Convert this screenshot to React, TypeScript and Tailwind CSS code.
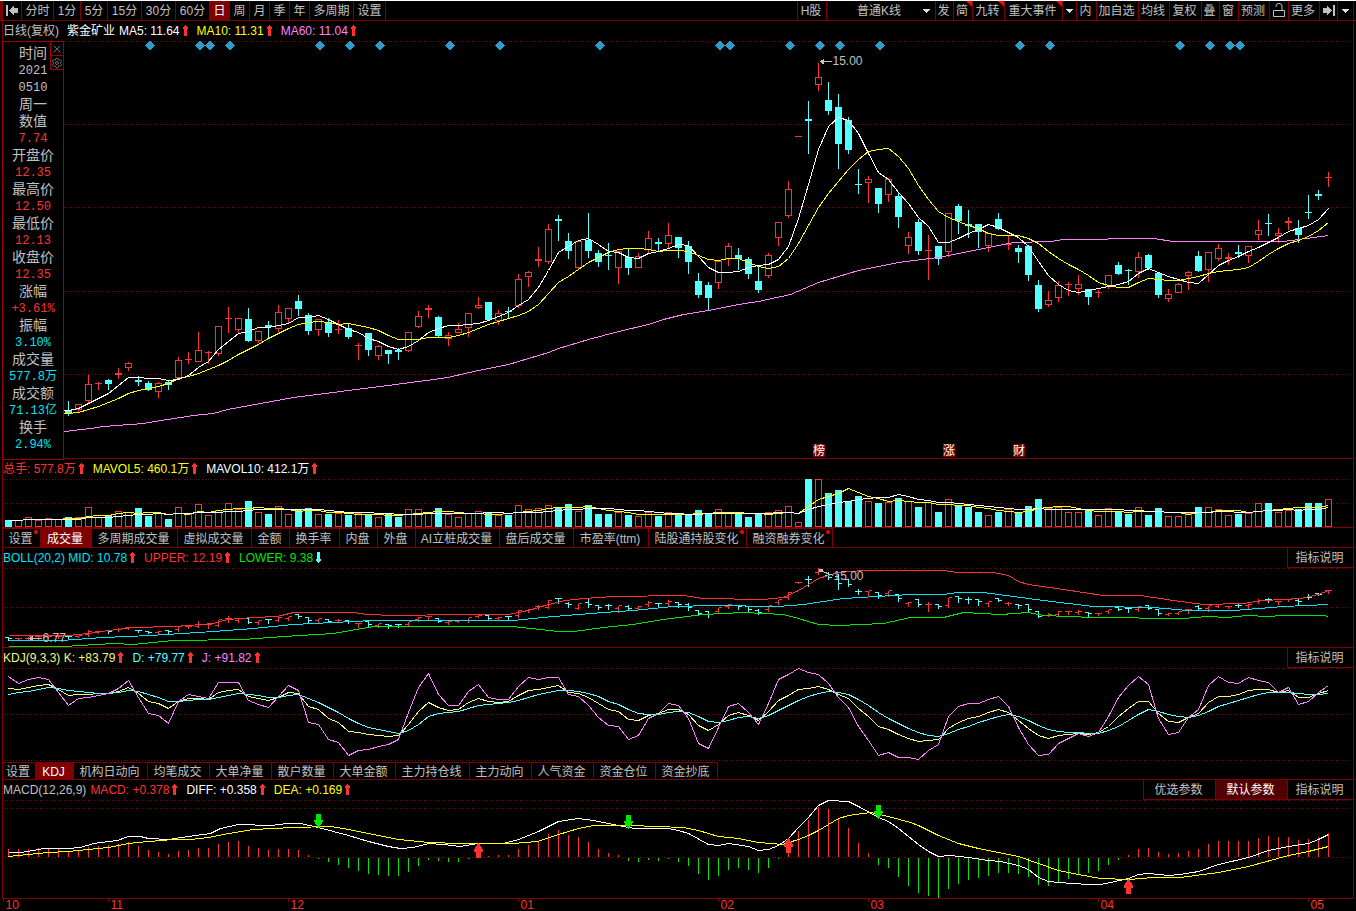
import type { ReactNode } from 'react';
import { Settings, X } from 'lucide-react';

// [direction, high, body top, body bottom, low], all as y positions
type Candle = ['u' | 'd', number, number, number, number];
type Point = [number, number];

const RED = '#ff3232';
const CYAN = '#54ffff';
const LINE = '#800000';

const candles: Candle[] = [
  ['d', 414, 418, 422, 424], ['u', 416, 420, 423, 425], ['u', 410, 412, 419, 420], ['u', 404, 408, 412, 424], ['u', 404, 408, 411, 414],
  ['u', 403, 408, 411, 415], ['d', 400, 410, 412, 415], ['u', 403, 404, 409, 412], ['u', 374, 384, 400, 403], ['u', 381, 383, 383, 389],
  ['d', 378, 380, 383, 389], ['u', 367, 373, 374, 378], ['u', 361, 363, 367, 370], ['d', 375, 380, 381, 385], ['d', 380, 383, 389, 390],
  ['u', 381, 383, 391, 397], ['d', 379, 382, 384, 389], ['u', 356, 360, 377, 378], ['u', 351, 359, 359, 363], ['u', 331, 350, 361, 361],
  ['u', 350, 352, 352, 363], ['u', 326, 326, 353, 355], ['u', 306, 318, 318, 332], ['u', 318, 318, 329, 333], ['d', 307, 319, 340, 341],
  ['u', 331, 331, 340, 342], ['d', 320, 325, 326, 338], ['u', 304, 312, 328, 331], ['u', 308, 308, 318, 322], ['d', 294, 301, 308, 315],
  ['d', 312, 315, 330, 334], ['u', 318, 319, 329, 335], ['d', 317, 322, 332, 336], ['u', 319, 329, 329, 333], ['d', 323, 328, 336, 338],
  ['u', 342, 345, 345, 359], ['d', 332, 333, 349, 355], ['u', 344, 346, 355, 359], ['d', 349, 350, 353, 363], ['d', 347, 350, 351, 359],
  ['u', 332, 332, 350, 351], ['u', 310, 316, 326, 327], ['u', 304, 308, 309, 317], ['d', 315, 317, 335, 336], ['u', 331, 335, 338, 345],
  ['u', 322, 329, 332, 332], ['u', 312, 313, 327, 336], ['u', 296, 305, 307, 308], ['d', 301, 302, 319, 320], ['u', 309, 313, 320, 324],
  ['d', 306, 311, 311, 317], ['u', 273, 279, 305, 307], ['u', 270, 272, 276, 286], ['u', 246, 259, 260, 266], ['u', 223, 229, 261, 263],
  ['d', 214, 219, 220, 240], ['d', 232, 241, 250, 258], ['u', 241, 241, 267, 269], ['d', 212, 240, 250, 257], ['d', 249, 253, 261, 266],
  ['d', 242, 255, 255, 269], ['u', 251, 251, 267, 283], ['d', 248, 257, 267, 274], ['u', 252, 256, 267, 267], ['u', 230, 238, 249, 252],
  ['d', 237, 242, 243, 251], ['u', 222, 235, 243, 248], ['d', 237, 237, 247, 257], ['d', 240, 246, 261, 273], ['d', 272, 281, 294, 297],
  ['d', 281, 285, 297, 309], ['u', 261, 261, 282, 288], ['u', 242, 246, 258, 265], ['d', 247, 255, 258, 269], ['d', 256, 259, 273, 278],
  ['d', 266, 281, 289, 292], ['u', 252, 255, 275, 277], ['u', 221, 222, 237, 245], ['u', 180, 189, 215, 217], ['u', 136, 136, 136, 136],
  ['d', 100, 119, 120, 153], ['u', 62, 77, 84, 90], ['d', 81, 100, 110, 114], ['d', 93, 107, 143, 168], ['d', 116, 120, 149, 153],
  ['d', 168, 184, 184, 193], ['u', 175, 179, 182, 202], ['d', 188, 188, 203, 212], ['u', 177, 179, 194, 201], ['d', 191, 196, 216, 227],
  ['u', 231, 237, 245, 253], ['d', 218, 222, 250, 254], ['u', 234, 250, 250, 279], ['d', 246, 246, 258, 264], ['u', 213, 213, 251, 256],
  ['d', 203, 206, 220, 233], ['d', 209, 224, 225, 237], ['d', 224, 224, 231, 247], ['u', 232, 233, 245, 251], ['d', 212, 219, 228, 229],
  ['u', 235, 244, 244, 249], ['d', 244, 248, 251, 262], ['d', 244, 246, 274, 280], ['d', 279, 285, 308, 311], ['u', 290, 300, 304, 306],
  ['u', 280, 285, 297, 301], ['u', 281, 284, 284, 295], ['u', 274, 284, 288, 294], ['d', 288, 289, 296, 304], ['u', 289, 292, 292, 297],
  ['u', 275, 275, 286, 288], ['d', 261, 265, 273, 274], ['d', 268, 270, 270, 284], ['u', 251, 257, 271, 277], ['d', 253, 255, 267, 269],
  ['d', 273, 273, 294, 297], ['u', 288, 294, 298, 301], ['u', 282, 284, 292, 292], ['u', 270, 272, 275, 289], ['d', 250, 256, 270, 271],
  ['u', 252, 252, 269, 281], ['u', 243, 248, 258, 260], ['u', 252, 257, 258, 264], ['d', 244, 252, 253, 257], ['u', 245, 246, 255, 262],
  ['u', 219, 230, 234, 239], ['d', 213, 223, 223, 235], ['u', 227, 233, 235, 242], ['u', 216, 221, 222, 229], ['d', 219, 228, 234, 242],
  ['d', 194, 212, 212, 218], ['d', 189, 194, 195, 199], ['u', 171, 177, 177, 186],
];

const volumes = [
  7, 7, 10, 7, 9, 8, 10, 10, 20, 10, 12, 16, 15, 19, 11, 14, 8, 20, 13, 23,
  12, 17, 24, 18, 26, 15, 13, 21, 13, 17, 19, 13, 13, 14, 12, 14, 13, 10, 13, 10,
  18, 18, 14, 19, 13, 10, 14, 16, 14, 12, 12, 22, 18, 19, 22, 20, 23, 16, 22, 13,
  13, 15, 12, 11, 15, 11, 15, 13, 13, 17, 14, 18, 14, 14, 10, 14, 15, 17, 21, 5,
  48, 48, 34, 37, 26, 31, 26, 24, 25, 29, 26, 20, 25, 15, 28, 22, 20, 15, 12, 15,
  18, 15, 21, 28, 19, 20, 15, 15, 18, 12, 19, 15, 13, 20, 12, 19, 11, 11, 14, 20,
  20, 18, 12, 13, 14, 24, 24, 15, 17, 18, 24, 24, 28,
];

const jLine = [
  8, 15, 11, 9, 11, 24, 37, 30, 29, 27, 25, 20, 12, 29, 45, 47, 55, 33, 26, 28,
  30, 14, 14, 14, 32, 36, 39, 28, 17, 22, 54, 56, 71, 74, 87, 82, 81, 78, 76, 71,
  44, 19, 5, 26, 37, 37, 23, 16, 29, 31, 31, 18, 9, 11, 9, 9, 26, 28, 37, 49,
  57, 58, 71, 67, 50, 45, 35, 37, 50, 75, 80, 59, 38, 35, 44, 56, 35, 11, 6, 0,
  4, 6, 15, 29, 39, 58, 72, 87, 84, 89, 89, 91, 82, 76, 48, 38, 35, 35, 31, 28,
  38, 59, 76, 87, 86, 75, 70, 65, 68, 64, 48, 29, 17, 8, 16, 50, 66, 64, 49, 41,
  17, 8, 14, 15, 9, 12, 14, 24, 19, 36, 33, 24, 17,
];

const macdBars = [
  8, 8, 8, 9, 8, 8, 6, 7, 10, 11, 12, 13, 15, 11, 7, 5, 3, 6, 7, 9,
  9, 13, 15, 16, 11, 9, 7, 8, 8, 7, 2, -1, -4, -7, -10, -13, -16, -17, -18, -18,
  -14, -8, -2, -3, -4, -4, -1, 1, 1, 2, 2, 8, 12, 16, 23, 27, 22, 20, 15, 8,
  4, 2, -3, -4, -2, -3, -1, -4, -8, -16, -22, -18, -12, -10, -12, -15, -10, -1, 6, 26,
  37, 50, 48, 38, 29, 14, 4, -7, -10, -19, -28, -35, -38, -40, -31, -26, -22, -20, -18, -15,
  -15, -16, -19, -27, -28, -24, -21, -16, -15, -13, -7, -2, 2, 8, 9, 5, 3, 4, 6, 8,
  13, 16, 16, 16, 16, 19, 21, 20, 20, 17, 18, 20, 24,
];

const ma60: Point[] = [
  [64, 431], [90, 428], [103, 426], [143, 423], [167, 419], [193, 415], [213, 413], [227, 409], [260, 403], [293, 397], [340, 391],
  [380, 386], [410, 382], [433, 379], [447, 377], [478, 370], [508, 364], [528, 358], [548, 352], [558, 348], [588, 339], [618, 331],
  [648, 324], [663, 319], [683, 314], [708, 310], [738, 304], [758, 301], [790, 294], [818, 282], [858, 270], [898, 262], [938, 257],
  [968, 251], [988, 247], [1013, 242], [1050, 241], [1063, 239], [1093, 239], [1123, 238], [1153, 238], [1173, 241], [1283, 241], [1328, 235],
];

const bollUpper: Point[] = [
  [8, 67], [68, 67], [88, 65], [108, 62], [133, 59], [173, 58], [188, 57], [213, 55], [227, 51], [253, 49], [277, 48], [293, 44], [353, 44],
  [367, 46], [393, 47], [460, 46], [508, 46], [528, 42], [548, 36], [565, 32], [583, 30], [613, 28], [683, 27], [703, 30], [763, 31],
  [783, 29], [798, 22], [818, 10], [838, 4], [863, 2], [903, 2], [943, 2], [957, 4], [993, 4], [1008, 7], [1018, 13], [1028, 16], [1063, 21],
  [1103, 27], [1140, 27], [1173, 32], [1203, 36], [1243, 35], [1263, 32], [1300, 30], [1318, 26], [1328, 22],
];
const bollMid: Point[] = [
  [8, 72], [60, 72], [103, 69], [150, 67], [213, 63], [253, 60], [293, 56], [333, 54], [373, 52], [460, 52], [512, 52], [553, 48], [603, 44],
  [633, 42], [673, 38], [713, 37], [777, 38], [803, 36], [843, 30], [910, 26], [943, 26], [957, 24], [983, 24], [1013, 28], [1043, 32],
  [1093, 38], [1153, 39], [1187, 42], [1233, 42], [1283, 38], [1328, 36],
];
const bollLower: Point[] = [
  [8, 78], [63, 78], [113, 75], [133, 76], [173, 72], [243, 71], [283, 68], [333, 65], [373, 58], [460, 58], [512, 58], [558, 63], [573, 63],
  [603, 59], [633, 56], [663, 51], [703, 46], [743, 44], [783, 46], [798, 50], [818, 56], [838, 57], [883, 55], [910, 49], [943, 49],
  [963, 44], [1000, 46], [1028, 44], [1043, 47], [1093, 49], [1183, 50], [1207, 48], [1227, 49], [1247, 47], [1267, 48], [1283, 47],
  [1323, 47], [1328, 48],
];

const diff: Point[] = [
  [8, 52], [20, 52], [33, 50], [43, 48], [68, 48], [80, 47], [93, 43], [117, 40], [128, 36], [140, 36], [148, 38], [168, 39], [188, 36],
  [210, 33], [220, 28], [238, 24], [270, 25], [287, 23], [300, 23], [318, 27], [348, 35], [368, 41], [388, 46], [400, 48], [413, 47],
  [428, 43], [443, 44], [460, 46], [478, 43], [503, 43], [518, 39], [538, 31], [558, 21], [578, 18], [593, 20], [608, 23], [628, 27],
  [635, 28], [668, 28], [678, 30], [688, 33], [708, 44], [718, 45], [728, 43], [748, 46], [758, 50], [768, 49], [778, 45], [788, 38],
  [798, 27], [808, 17], [818, 5], [828, 0], [848, 1], [858, 6], [878, 17], [888, 21], [898, 28], [918, 44], [928, 51], [938, 56], [950, 55],
  [968, 57], [988, 60], [1000, 61], [1018, 65], [1028, 69], [1038, 77], [1048, 81], [1058, 82], [1073, 83], [1088, 84], [1100, 84],
  [1110, 82], [1128, 78], [1138, 74], [1148, 73], [1168, 75], [1180, 74], [1198, 71], [1218, 64], [1248, 57], [1268, 50], [1288, 46],
  [1308, 43], [1318, 39], [1328, 34],
];
const dea: Point[] = [
  [8, 56], [48, 52], [68, 51], [88, 49], [108, 47], [128, 43], [148, 41], [173, 39], [190, 39], [208, 37], [228, 33], [253, 29], [293, 27],
  [330, 26], [348, 29], [368, 33], [398, 39], [428, 42], [460, 43], [513, 43], [537, 41], [558, 34], [578, 28], [593, 25], [630, 25],
  [683, 27], [698, 30], [718, 36], [738, 38], [758, 42], [782, 44], [788, 42], [798, 39], [808, 35], [818, 30], [838, 18], [848, 15],
  [870, 12], [888, 16], [910, 22], [918, 25], [938, 35], [958, 43], [978, 48], [1018, 56], [1038, 63], [1058, 70], [1078, 74], [1100, 78],
  [1128, 79], [1153, 77], [1180, 77], [1218, 72], [1248, 66], [1288, 55], [1308, 51], [1328, 46],
];

const diamonds = [149, 199, 209, 229, 319, 349, 379, 449, 499, 599, 719, 729, 789, 819, 839, 879, 1019, 1049, 1179, 1209, 1229, 1239];

const xAt = (i: number) => 8 + i * 10;
const close = (c: Candle) => (c[0] === 'u' ? c[2] : c[3]);
const color = (c: Candle) => (c[0] === 'u' ? RED : CYAN);

const average = (values: number[], size: number): number[] =>
  values.map((_, i) => {
    const part = values.slice(Math.max(0, i - size + 1), i + 1);
    return part.reduce((a, b) => a + b, 0) / part.length;
  });

const series = (values: number[]): Point[] => values.map((v, i) => [xAt(i), Math.round(v)]);

// D is smoothed from J, and K follows from J = 3K - 2D
const dLine: number[] = [];
jLine.forEach((j, i) => dLine.push(i === 0 ? 26 : (6 * dLine[i - 1] + j) / 7));
const kLine = jLine.map((j, i) => (j + 2 * dLine[i]) / 3);

function Line({ points, stroke }: { points: Point[]; stroke: string }) {
  return <polyline points={points.map((p) => p.join(',')).join(' ')} fill="none" stroke={stroke} />;
}

function Grid({ y }: { y: number }) {
  return <line x1="3" x2="100%" y1={y} y2={y} stroke={LINE} strokeDasharray="1 2" />;
}

function Chart({ className, label, top = 0, children }: { className: string; label: string; top?: number; children: ReactNode }) {
  return (
    <svg className={`block w-full overflow-hidden ${className}`} role="img" aria-label={label} shapeRendering="crispEdges">
      <g transform={`translate(-2.5 ${0.5 - top})`}>{children}</g>
    </svg>
  );
}

function Trend({ down = false }: { down?: boolean }) {
  return (
    <svg width="5" height="11" viewBox="0 0 5 11" className="mr-[9px] mb-px ml-[3px] shrink-0" shapeRendering="crispEdges">
      <path
        d={down ? 'M1 0h3v7h1v2h-1v1h-1v1h-1v-1h-1v-1h-1v-2h1z' : 'M1 11h3v-7h1v-2h-1v-1h-1v-1h-1v1h-1v1h-1v2h1z'}
        fill={down ? CYAN : RED}
      />
    </svg>
  );
}

function Caret() {
  return (
    <svg width="7" height="4" viewBox="0 0 7 4" shapeRendering="crispEdges">
      <path d="M0 0h7L3.5 4z" fill="#e0e0e0" />
    </svg>
  );
}

function InfoRow({ children, actions }: { children: ReactNode; actions?: ReactNode }) {
  return (
    <div className="flex h-5 items-stretch justify-between leading-5">
      <div className="flex items-center">{children}</div>
      {actions && <div className="flex">{actions}</div>}
    </div>
  );
}

function HelpButton() {
  return <button className="w-[66px] border-b border-l border-[#800000] pt-[2px] pr-[2px] text-center leading-[17px]">指标说明</button>;
}

const periods = [
  { label: '分时', width: 'w-[32px]' },
  { label: '1分', width: 'w-[27px]' },
  { label: '5分', width: 'w-[27px]' },
  { label: '15分', width: 'w-[34px]' },
  { label: '30分', width: 'w-[34px]' },
  { label: '60分', width: 'w-[34px]' },
  { label: '日', width: 'w-[20px]', active: true },
  { label: '周', width: 'w-[20px]' },
  { label: '月', width: 'w-[20px]' },
  { label: '季', width: 'w-[20px]' },
  { label: '年', width: 'w-[20px]' },
  { label: '多周期', width: 'w-[44px]' },
  { label: '设置', width: 'w-[32px]' },
];

interface Tool {
  label: string;
  width: string;
  isNew?: boolean;
  icon?: ReactNode;
}

const tools: Tool[] = [
  { label: '发', width: 'w-[18px]' },
  { label: '简', width: 'w-[19px]', isNew: true },
  { label: '九转', width: 'w-[32px]', isNew: true },
  { label: '重大事件', width: 'w-[58px]', isNew: true },
  { label: '事件列表', width: 'w-[14px]', icon: <Caret /> },
  { label: '内', width: 'w-[20px]' },
  { label: '加自选', width: 'w-[42px]' },
  { label: '均线', width: 'w-[31px]' },
  { label: '复权', width: 'w-[32px]' },
  { label: '叠', width: 'w-[18px]' },
  { label: '窗', width: 'w-[19px]' },
  { label: '预测', width: 'w-[31px]' },
  {
    label: '锁定',
    width: 'w-[19px]',
    icon: (
      <svg width="12" height="15" viewBox="0 0 12 15" fill="none" stroke="#c0c0c0">
        <path d="M.5 7.500h11v6H.5zM3 4V3q0-2.500 3-2.500T9 3v4.500" />
      </svg>
    ),
  },
  { label: '更多', width: 'w-[31px]' },
  {
    label: '最后',
    width: 'w-[18px]',
    icon: (
      <svg width="12" height="11" viewBox="0 0 12 11" fill="#c0c0c0" shapeRendering="crispEdges">
        <path d="M0 3h4V0l5 5.500L4 11V8H0zM10 0h2v11h-2z" />
      </svg>
    ),
  },
  { label: '菜单', width: 'w-[16px]', icon: <Caret /> },
];

function Toolbar() {
  return (
    <header className="flex h-5 justify-between border-b border-[#800000] text-[#c0c0c0]">
      <div className="flex border-l-[3px] border-[#800000]">
        <button aria-label="最前" className="flex w-[19px] items-center justify-center border-r border-[#800000]">
          <svg width="12" height="11" viewBox="0 0 12 11" fill="#c0c0c0" shapeRendering="crispEdges">
            <path d="M12 3H8V0L3 5.500 8 11V8h4zM0 0h2v11H0z" />
          </svg>
        </button>
        {periods.map((p) => (
          <button
            key={p.label}
            className={`border-r border-[#800000] pt-[2px] text-center leading-[17px] whitespace-nowrap ${p.width} ${p.active ? 'bg-[#800000] text-white' : ''}`}
          >
            {p.label}
          </button>
        ))}
      </div>
      <div className="mr-[2px] flex">
        <button className="w-[30px] border-x border-[#800000] pt-[2px] pr-[2px] leading-[17px]">H股</button>
        <div className="relative flex w-[109px] border-r border-[#800000]">
          <select aria-label="K线类型" className="w-full appearance-none bg-black pt-[2px] pl-[30px] leading-[17px] outline-none">
            <option>普通K线</option>
          </select>
          <span className="pointer-events-none absolute top-[8px] right-[5px]">
            <Caret />
          </span>
        </div>
        {tools.map((tool) => (
          <button
            key={tool.label}
            aria-label={tool.label}
            className={`relative flex items-center justify-center border-r border-[#800000] leading-[17px] whitespace-nowrap ${tool.width} ${
              tool.icon ? '' : 'pt-[2px] pr-[2px]'
            }`}
          >
            {tool.icon ?? tool.label}
            {tool.isNew && (
              <svg width="6" height="6" className="absolute top-0 right-0">
                <path d="M0 0h6v6z" fill="#ff0000" />
              </svg>
            )}
          </button>
        ))}
      </div>
    </header>
  );
}

interface Tab {
  label: string;
  width: string;
  dot?: boolean;
}

const volumeTabs: Tab[] = [
  { label: '设置', width: 'w-[38px]', dot: true },
  { label: '成交量', width: 'w-[51px]' },
  { label: '多周期成交量', width: 'w-[86px]' },
  { label: '虚拟成交量', width: 'w-[74px]' },
  { label: '金额', width: 'w-[38px]' },
  { label: '换手率', width: 'w-[50px]' },
  { label: '内盘', width: 'w-[38px]' },
  { label: '外盘', width: 'w-[38px]' },
  { label: 'AI立桩成交量', width: 'w-[84px]' },
  { label: '盘后成交量', width: 'w-[74px]' },
  { label: '市盈率(ttm)', width: 'w-[75px]' },
  { label: '陆股通持股变化', width: 'w-[98px]', dot: true },
  { label: '融资融券变化', width: 'w-[86px]', dot: true },
];

const kdjTabs: Tab[] = [
  { label: '设置', width: 'w-[33px]' },
  { label: 'KDJ', width: 'w-[38px]' },
  { label: '机构日动向', width: 'w-[74px]' },
  { label: '均笔成交', width: 'w-[62px]' },
  { label: '大单净量', width: 'w-[62px]' },
  { label: '散户数量', width: 'w-[62px]' },
  { label: '大单金额', width: 'w-[62px]' },
  { label: '主力持仓线', width: 'w-[74px]' },
  { label: '主力动向', width: 'w-[62px]' },
  { label: '人气资金', width: 'w-[62px]' },
  { label: '资金仓位', width: 'w-[62px]' },
  { label: '资金抄底', width: 'w-[62px]' },
];

function Tabs({ tabs, active, className }: { tabs: Tab[]; active: string; className: string }) {
  return (
    <nav className={`flex border-[#800000] leading-4 ${className}`}>
      {tabs.map((tab) => (
        <button
          key={tab.label}
          className={`relative border-t border-r border-[#800000] pt-px pr-[2px] text-center whitespace-nowrap ${tab.width} ${
            tab.label === active ? 'bg-[#800000] text-white' : ''
          }`}
        >
          {tab.label}
          {tab.dot && <span className="absolute top-[1px] right-[2px] size-1 rounded-full bg-[#ff0000]"></span>}
        </button>
      ))}
    </nav>
  );
}

const quote = [
  { label: '时间', value: '2021', color: 'text-[#c0c0c0]' },
  { label: '', value: '0510', color: 'text-[#c0c0c0]' },
  { label: '周一', value: '' },
  { label: '数值', value: '7.74', color: 'text-[#ff3232]' },
  { label: '开盘价', value: '12.35', color: 'text-[#ff3232]' },
  { label: '最高价', value: '12.50', color: 'text-[#ff3232]' },
  { label: '最低价', value: '12.13', color: 'text-[#ff3232]' },
  { label: '收盘价', value: '12.35', color: 'text-[#ff3232]' },
  { label: '涨幅', value: '+3.61%', color: 'text-[#ff3232]' },
  { label: '振幅', value: '3.10%', color: 'text-[#02e2f4]' },
  { label: '成交量', value: '577.8万', color: 'text-[#02e2f4]' },
  { label: '成交额', value: '71.13亿', color: 'text-[#02e2f4]' },
  { label: '换手', value: '2.94%', color: 'text-[#02e2f4]' },
];

// Floating window over the left edge of the price chart
function QuotePanel() {
  return (
    <aside className="absolute top-0 -left-px h-[419px] w-[62px] border border-[#a00000] bg-black pt-[3px]">
      <div className="absolute -top-px -right-px flex w-[14px] flex-col border border-[#a00000] text-[#707070]">
        <button aria-label="关闭" className="flex h-[13px] items-center justify-center">
          <X size={12} strokeWidth={2} />
        </button>
        <button aria-label="面板设置" className="flex h-[14px] items-center justify-center border-t border-[#a00000]">
          <Settings size={12} strokeWidth={2} />
        </button>
      </div>
      <dl className="text-center">
        {quote.map((q, i) => (
          <div key={i}>
            {q.label && <dt className="h-[17px] text-sm leading-[17px]">{q.label}</dt>}
            {q.value && (
              <dd className={`h-[17px] font-['Liberation_Mono','Noto_Sans_CJK_SC',monospace] leading-[19px] whitespace-nowrap ${q.color}`}>
                {q.value}
              </dd>
            )}
          </div>
        ))}
      </dl>
    </aside>
  );
}

function PriceChart() {
  const closes = candles.map(close);
  return (
    <Chart className="h-[418px]" label="日K线" top={41}>
      {[41, 124, 207, 291, 374].map((y) => (
        <Grid key={y} y={y} />
      ))}
      <line x1="0" x2="101%" y1="458" y2="458" stroke={LINE} />
      {diamonds.map((x) => (
        <path key={x} d={`M${x} 40l5 5-5 5-5-5z`} fill="#2f9bcb" />
      ))}
      {candles.map((c, i) => {
        const x = xAt(i);
        const [, high, top, bottom, low] = c;
        return (
          <g key={i} stroke={color(c)} fill={c[0] === 'u' ? 'none' : CYAN}>
            {high < top && <line x1={x} x2={x} y1={high} y2={top} />}
            {low > bottom && <line x1={x} x2={x} y1={bottom} y2={low} />}
            {top === bottom ? <line x1={x - 3.5} x2={x + 3.5} y1={top} y2={top} /> : <rect x={x - 3} y={top} width="6" height={bottom - top} />}
          </g>
        );
      })}
      <Line points={ma60} stroke="#ff80ff" />
      <Line points={series(average(closes, 10))} stroke="#ffff00" />
      <Line points={series(average(closes, 5))} stroke="#ffffff" />
      <path d="M819 61h12M822 59v4M820 61l3-2v4z" stroke="#c0c0c0" fill="#c0c0c0" />
      <text x="832" y="64" fill="#c0c0c0">
        15.00
      </text>
      {[
        { x: 813, label: '榜' },
        { x: 943, label: '涨' },
        { x: 1013, label: '财' },
      ].map((e) => (
        <g key={e.x}>
          <rect x={e.x - 0.5} y="443.500" width="12" height="13" fill={LINE} />
          <text x={e.x - 0.5} y="454.500" fill="#ffffff">
            {e.label}
          </text>
        </g>
      ))}
    </Chart>
  );
}

function VolumeChart() {
  const line = (size: number) => series(average(volumes, size).map((v) => 48 - v));
  return (
    <Chart className="h-[48px]" label="成交量">
      <Grid y={0} />
      <Grid y={24} />
      {volumes.map((v, i) => (
        <rect
          key={i}
          x={xAt(i) - 3}
          y={48 - v}
          width="6"
          height={v - 1}
          stroke={color(candles[i])}
          fill={candles[i][0] === 'u' ? 'none' : CYAN}
        />
      ))}
      <Line points={line(5)} stroke="#ffff00" />
      <Line points={line(10)} stroke="#ffffff" />
    </Chart>
  );
}

function BollChart() {
  const scale = (y: number) => Math.round(22 + (y - 177) * 0.197);
  return (
    <Chart className="h-[80px]" label="BOLL">
      <Grid y={0} />
      <Grid y={39} />
      <line x1="0" x2="101%" y1="79" y2="79" stroke={LINE} />
      {candles.map((c, i) => {
        const x = xAt(i);
        const open = scale(c[0] === 'u' ? c[3] : c[2]);
        return (
          <path key={i} d={`M${x - 3.5} ${open}h4M${x} ${scale(c[1])}V${scale(c[4]) + 1}M${x} ${scale(close(c))}h3.500`} stroke={color(c)} />
        );
      })}
      <Line points={bollUpper} stroke={RED} />
      <Line points={bollMid} stroke="#02e2f4" />
      <Line points={bollLower} stroke="#00e600" />
      <path d="M28 70h13M29 70l3-2v4zM819 2l14 5M819 1h3v2h-3z" stroke="#c0c0c0" fill="#c0c0c0" />
      <text x="42" y="73" fill="#c0c0c0">
        6.77
      </text>
      <text x="833" y="11" fill="#c0c0c0">
        15.00
      </text>
    </Chart>
  );
}

function KdjChart() {
  return (
    <Chart className="h-[94px]" label="KDJ">
      <Grid y={0} />
      <Grid y={46} />
      <Grid y={92} />
      <Line points={series(kLine)} stroke="#f4f880" />
      <Line points={series(dLine)} stroke={CYAN} />
      <Line points={series(jLine)} stroke="#ff80ff" />
    </Chart>
  );
}

const signals = [
  { x: 318, y: 13, up: false },
  { x: 478, y: 43, up: true },
  { x: 628, y: 14, up: false },
  { x: 788, y: 38, up: true },
  { x: 878, y: 4, up: false },
  { x: 1128, y: 79, up: true },
];

function MacdChart() {
  return (
    <Chart className="h-[99px]" label="MACD">
      <Grid y={0} />
      <Grid y={8} />
      <Grid y={57} />
      <line x1="0" x2="101%" y1="98" y2="98" stroke={LINE} />
      {macdBars.map((v, i) => (
        <line key={i} x1={xAt(i)} x2={xAt(i)} y1={v > 0 ? 56.5 : 57.5} y2={v > 0 ? 56.5 - v : 57.5 - v} stroke={v > 0 ? RED : '#00e600'} />
      ))}
      <Line points={diff} stroke="#ffffff" />
      <Line points={dea} stroke="#ffff00" />
      {signals.map((s) => (
        <path
          key={s.x}
          transform={`translate(${s.x} ${s.y})`}
          d={s.up ? 'M0-1l2.500 4 2 3v2h-2v6h-5V8h-2V6l2-3z' : 'M-2.500 0h5v6h2v2l-2 3-2.500 4-2.500-4-2-3V6h2z'}
          fill={s.up ? RED : '#00e600'}
        />
      ))}
    </Chart>
  );
}

const months = [
  { x: 3, label: '10' },
  { x: 108, label: '11' },
  { x: 288, label: '12' },
  { x: 518, label: '01' },
  { x: 718, label: '02' },
  { x: 868, label: '03' },
  { x: 1098, label: '04' },
  { x: 1308, label: '05' },
];

export default function App() {
  return (
    <div className="min-h-screen overflow-hidden border-t border-white bg-black font-['Liberation_Sans','Noto_Sans_CJK_SC',sans-serif] text-xs text-[#c0c0c0]">
      <Toolbar />

      <main className="mx-[2px] border-x border-[#800000]">
        <InfoRow>
          <span>日线(复权)</span>
          <span className="ml-[8px] text-white">紫金矿业</span>
          <span className="ml-[4px] text-white">MA5: 11.64</span>
          <Trend />
          <span className="text-[#ffff00]">MA10: 11.31</span>
          <Trend />
          <span className="text-[#ff80ff]">MA60: 11.04</span>
          <Trend />
        </InfoRow>
        <section className="relative">
          <PriceChart />
          <QuotePanel />
        </section>

        <InfoRow>
          <span className="text-[#ff3232]">总手: 577.8万</span>
          <Trend />
          <span className="text-[#ffff00]">MAVOL5: 460.1万</span>
          <Trend />
          <span className="text-white">MAVOL10: 412.1万</span>
          <Trend />
        </InfoRow>
        <VolumeChart />
        <Tabs tabs={volumeTabs} active="成交量" className="h-[21px] border-y" />

        <InfoRow actions={<HelpButton />}>
          <span className="text-[#02e2f4]">BOLL(20,2) MID: 10.78</span>
          <Trend />
          <span className="text-[#ff3232]">UPPER: 12.19</span>
          <Trend />
          <span className="text-[#00e600]">LOWER: 9.38</span>
          <Trend down />
        </InfoRow>
        <BollChart />

        <InfoRow actions={<HelpButton />}>
          <span className="text-[#f4f880]">KDJ(9,3,3) K: +83.79</span>
          <Trend />
          <span className="text-[#54ffff]">D: +79.77</span>
          <Trend />
          <span className="text-[#ff80ff]">J: +91.82</span>
          <Trend />
        </InfoRow>
        <KdjChart />
        <Tabs tabs={kdjTabs} active="KDJ" className="h-[18px] border-b" />

        <InfoRow
          actions={
            <>
              <button className="w-[72px] border-b border-l border-[#800000] pt-[2px] pr-[2px] text-center leading-[17px]">优选参数</button>
              <button className="w-[72px] border-b border-l border-[#800000] bg-[#500000] pt-[2px] pr-[2px] text-center leading-[17px] text-white">
                默认参数
              </button>
              <HelpButton />
            </>
          }
        >
          <span>MACD(12,26,9)</span>
          <span className="ml-[4px] text-[#ff3232]">MACD: +0.378</span>
          <Trend />
          <span className="text-white">DIFF: +0.358</span>
          <Trend />
          <span className="text-[#ffff00]">DEA: +0.169</span>
          <Trend />
        </InfoRow>
        <MacdChart />
      </main>

      <footer className="mx-[3px]">
        <Chart className="h-[12px]" label="月份">
          {months.map((m) => (
            <g key={m.x}>
              <line x1={m.x} x2={m.x} y1="-1" y2="2" stroke={LINE} />
              <text x={m.x + 2} y="9" fill={RED}>
                {m.label}
              </text>
            </g>
          ))}
        </Chart>
      </footer>
    </div>
  );
}
